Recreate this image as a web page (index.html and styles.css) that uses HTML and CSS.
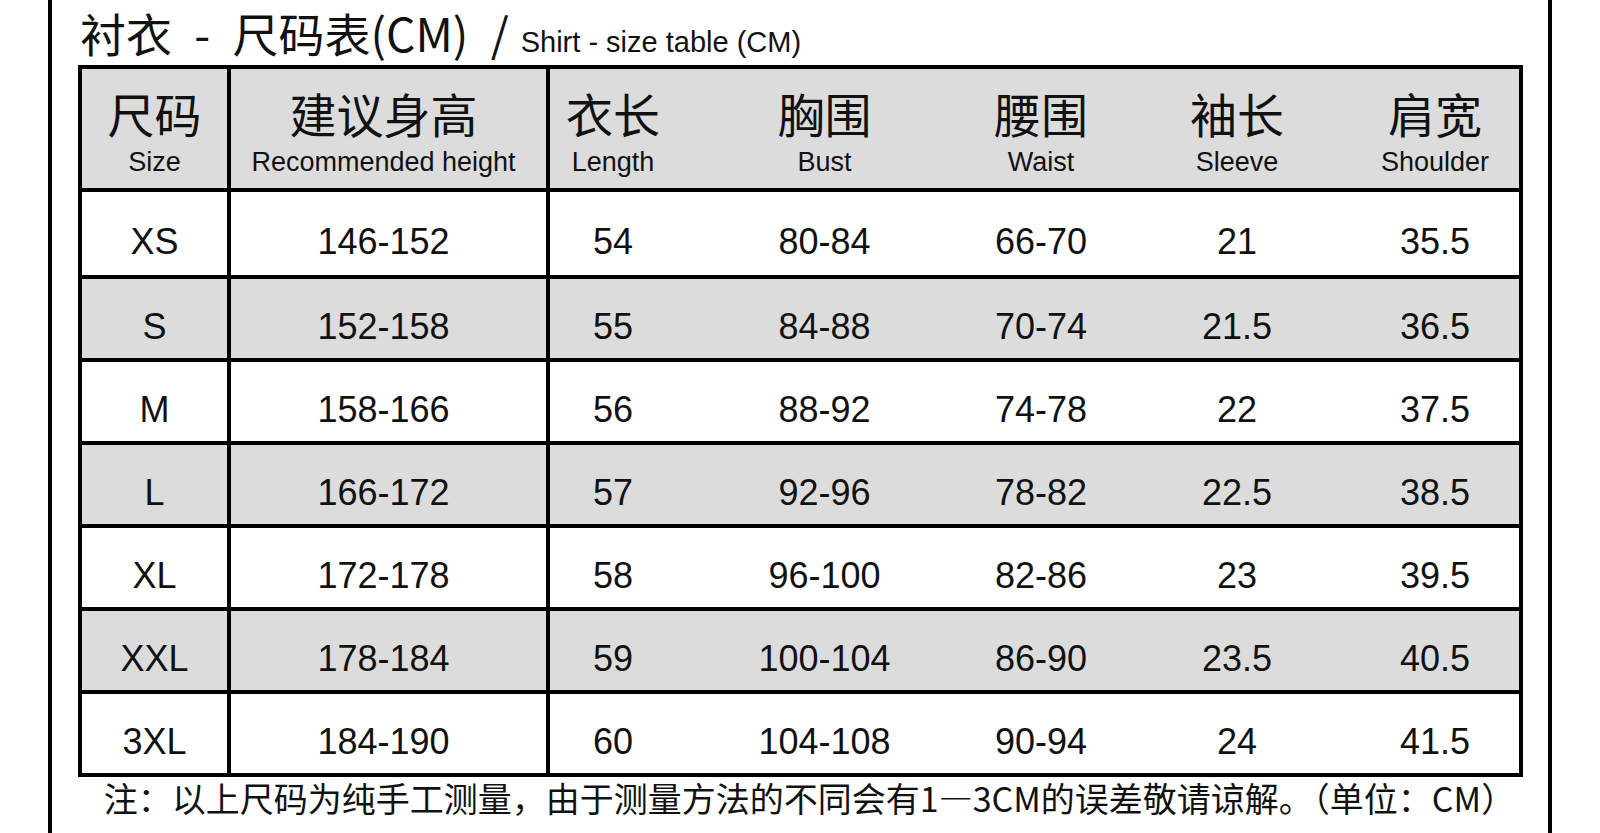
FILE: index.html
```html
<!DOCTYPE html>
<html lang="zh-CN">
<head>
<meta charset="utf-8">
<title>衬衣 - 尺码表</title>
<link rel="stylesheet" href="styles.css">
</head>
<body>
<div class="page">
  <h1 class="title"><span class="title-cn">衬衣 - 尺码表(CM) /</span><span class="title-en">Shirt - size table (CM)</span></h1>
  <div class="table">
    <div class="row head">
      <div class="cell c1"><span class="cn">尺码</span><span class="en">Size</span></div>
      <div class="cell c2"><span class="cn">建议身高</span><span class="en">Recommended height</span></div>
      <div class="cell"><span class="cn">衣长</span><span class="en">Length</span></div>
      <div class="cell"><span class="cn">胸围</span><span class="en">Bust</span></div>
      <div class="cell"><span class="cn">腰围</span><span class="en">Waist</span></div>
      <div class="cell"><span class="cn">袖长</span><span class="en">Sleeve</span></div>
      <div class="cell c7"><span class="cn">肩宽</span><span class="en">Shoulder</span></div>
    </div>
    <div class="row data first">
      <div class="cell c1">XS</div><div class="cell c2">146-152</div><div class="cell">54</div><div class="cell">80-84</div><div class="cell">66-70</div><div class="cell">21</div><div class="cell c7">35.5</div>
    </div>
    <div class="row data alt">
      <div class="cell c1">S</div><div class="cell c2">152-158</div><div class="cell">55</div><div class="cell">84-88</div><div class="cell">70-74</div><div class="cell">21.5</div><div class="cell c7">36.5</div>
    </div>
    <div class="row data">
      <div class="cell c1">M</div><div class="cell c2">158-166</div><div class="cell">56</div><div class="cell">88-92</div><div class="cell">74-78</div><div class="cell">22</div><div class="cell c7">37.5</div>
    </div>
    <div class="row data alt">
      <div class="cell c1">L</div><div class="cell c2">166-172</div><div class="cell">57</div><div class="cell">92-96</div><div class="cell">78-82</div><div class="cell">22.5</div><div class="cell c7">38.5</div>
    </div>
    <div class="row data">
      <div class="cell c1">XL</div><div class="cell c2">172-178</div><div class="cell">58</div><div class="cell">96-100</div><div class="cell">82-86</div><div class="cell">23</div><div class="cell c7">39.5</div>
    </div>
    <div class="row data alt">
      <div class="cell c1">XXL</div><div class="cell c2">178-184</div><div class="cell">59</div><div class="cell">100-104</div><div class="cell">86-90</div><div class="cell">23.5</div><div class="cell c7">40.5</div>
    </div>
    <div class="row data">
      <div class="cell c1">3XL</div><div class="cell c2">184-190</div><div class="cell">60</div><div class="cell">104-108</div><div class="cell">90-94</div><div class="cell">24</div><div class="cell c7">41.5</div>
    </div>
  </div>
  <p class="note">注：以上尺码为纯手工测量，由于测量方法的不同会有1—3CM的误差敬请谅解。（单位：CM）</p>
</div>
</body>
</html>
```
FILE: styles.css
```css
html, body {
  margin: 0;
  padding: 0;
  background: #fff;
}

body {
  font-family: "Liberation Sans", "Noto Sans CJK SC", sans-serif;
  color: #111;
}

.page {
  box-sizing: border-box;
  margin-left: 48px;
  width: 1504px;
  height: 833px;
  border-left: 4px solid #000;
  border-right: 4px solid #000;
  padding: 0 25px 0 26px;
  overflow: hidden;
}

.title {
  margin: 0;
  height: 65px;
  display: flex;
  align-items: baseline;
  padding-left: 2px;
  font-weight: normal;
  line-height: 1;
  padding-top: 9px;
  box-sizing: border-box;
}

.title-cn {
  font-family: "Noto Sans CJK SC", sans-serif;
  font-size: 46px;
  word-spacing: 12px;
}

.title-en {
  font-family: "Liberation Sans", sans-serif;
  font-size: 29px;
  margin-left: 12px;
}

.table {
  width: 1445px;
  box-sizing: border-box;
  border: 4px solid #000;
}

.row {
  display: grid;
  grid-template-columns: 149px 319px 126px 297px 136px 256px 154px;
  box-sizing: border-box;
}

.row + .row {
  border-top: 4px solid #000;
}

.head {
  height: 119px;
  background: #dcdcdc;
}

.data {
  height: 83px;
  background: #fff;
}

.data.first {
  height: 87px;
}

.data.alt {
  background: #dcdcdc;
}

.cell {
  box-sizing: border-box;
  display: flex;
  flex-direction: column;
  align-items: center;
  justify-content: center;
  text-align: center;
}

.c1 {
  border-right: 4px solid #000;
}

.c2 {
  border-right: 4px solid #000;
  padding-right: 10px;
}

.c7 {
  padding-right: 14px;
}

.head .cn {
  font-family: "Noto Sans CJK SC", sans-serif;
  font-size: 47px;
  line-height: 68px;
}

.head .en {
  font-family: "Liberation Sans", sans-serif;
  font-size: 27px;
  line-height: 31px;
}

.data .cell {
  font-size: 36px;
  padding-top: 16px;
}

.data .c2 {
  padding-right: 10px;
}

.data .c7 {
  padding-right: 14px;
}

.note {
  margin: 1px 0 0;
  padding-left: 18px;
  text-align: center;
  font-family: "Noto Sans CJK SC", sans-serif;
  font-size: 34px;
  line-height: 40px;
}
```
